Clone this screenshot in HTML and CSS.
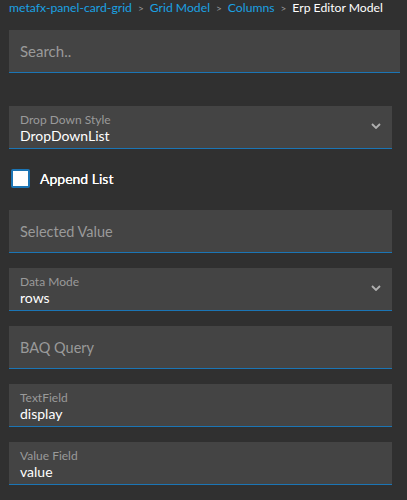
FILE: index.html
```html
<!DOCTYPE html>
<html lang="en">
<head>
  <meta charset="UTF-8" />
  <title>Erp Editor Model</title>
  <link rel="stylesheet" href="styles.css">
</head>
<body>

  <div class="crumbs">
    <a href="#">metafx-panel-card-grid</a><span class="sep">&gt;</span><a href="#">Grid Model</a><span class="sep">&gt;</span><a href="#">Columns</a><span class="sep">&gt;</span><span class="current">Erp Editor Model</span>
  </div>

  <div class="search">
    <input type="text" placeholder="Search..">
  </div>

  <div class="editor">
    <div class="field select">
      <label>Drop Down Style</label>
      <div class="value">DropDownList</div>
      <svg class="chev" width="10" height="6" viewBox="0 0 10 6"><path d="M1 1 L5 5 L9 1" fill="none" stroke="#b0b0b0" stroke-width="1.8"/></svg>
    </div>

    <div class="check">
      <span class="box"></span>
      <span class="check-label">Append List</span>
    </div>

    <div class="field empty"><span class="placeholder">Selected Value</span></div>

    <div class="field select">
      <label>Data Mode</label>
      <div class="value">rows</div>
      <svg class="chev" width="10" height="6" viewBox="0 0 10 6"><path d="M1 1 L5 5 L9 1" fill="none" stroke="#b0b0b0" stroke-width="1.8"/></svg>
    </div>

    <div class="field empty"><span class="placeholder">BAQ Query</span></div>

    <div class="field">
      <label>TextField</label>
      <div class="value">display</div>
    </div>

    <div class="field">
      <label>Value Field</label>
      <div class="value">value</div>
    </div>
  </div>

</body>
</html>
```

FILE: styles.css
```css
body {
  margin: 0;
  background-color: #303030;
  font-family: Lato, "Noto Sans", sans-serif;
  color: white;
  padding: 0 7px 0 9px;
}
.crumbs {
  font-size: 12.2px;
  line-height: 13px;
  padding-top: 1px;
  white-space: nowrap;
  color: #9a9a9a;
}
.crumbs a {
  color: #1ba1e2;
  text-decoration: none;
}
.crumbs .sep {
  margin: 0 6px;
  font-size: 10px;
}
.crumbs .current {
  color: white;
}
.search {
  margin-top: 15px;
}
.search input {
  display: block;
  width: 100%;
  box-sizing: border-box;
  height: 43px;
  border: none;
  border-bottom: 1px solid #1b75b5;
  background-color: #444444;
  color: white;
  font-family: inherit;
  font-size: 15px;
  padding: 0 11px;
  outline: none;
}
.search input::placeholder {
  color: #9a9a9a;
}
.editor {
  margin-top: 33px;
  padding-right: 8px;
}
.field {
  position: relative;
  height: 42px;
  background-color: #444444;
  border-bottom: 1px solid #1b75b5;
  padding: 0 11px;
  margin-bottom: 15px;
}
.field label {
  display: block;
  padding-top: 7px;
  font-size: 12px;
  line-height: 14px;
  color: #9a9a9a;
}
.field .value {
  font-size: 14px;
  line-height: 18px;
  color: white;
}
.field.empty {
  display: flex;
  align-items: center;
}
.placeholder {
  font-size: 14.5px;
  color: #9a9a9a;
}
.chev {
  position: absolute;
  right: 11px;
  top: 17px;
}
.check {
  display: flex;
  align-items: center;
  margin: 20px 0 22px 2px;
  height: 19px;
}
.check .box {
  width: 15px;
  height: 15px;
  border: 2px solid #1b75b5;
  background-color: white;
  border-radius: 2px;
}
.check-label {
  margin-left: 10px;
  font-size: 14px;
  text-shadow: 0 0 0.4px white;
}
```
